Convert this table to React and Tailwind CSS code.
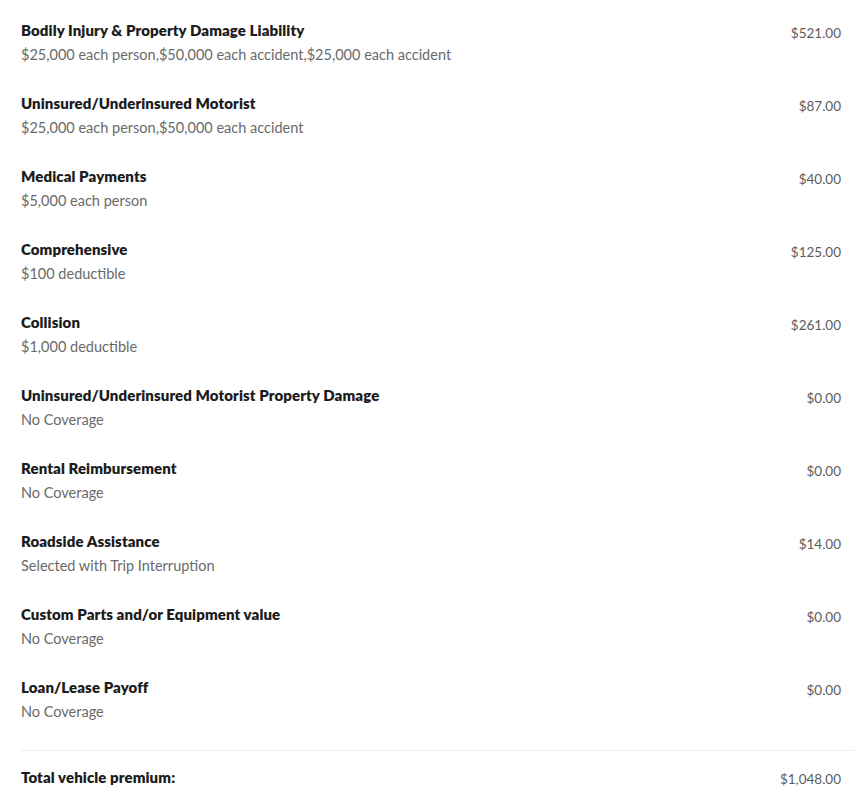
const COVERAGES = [
  { name: "Bodily Injury & Property Damage Liability", detail: "$25,000 each person,$50,000 each accident,$25,000 each accident", price: "$521.00" },
  { name: "Uninsured/Underinsured Motorist", detail: "$25,000 each person,$50,000 each accident", price: "$87.00" },
  { name: "Medical Payments", detail: "$5,000 each person", price: "$40.00" },
  { name: "Comprehensive", detail: "$100 deductible", price: "$125.00" },
  { name: "Collision", detail: "$1,000 deductible", price: "$261.00" },
  { name: "Uninsured/Underinsured Motorist Property Damage", detail: "No Coverage", price: "$0.00" },
  { name: "Rental Reimbursement", detail: "No Coverage", price: "$0.00" },
  { name: "Roadside Assistance", detail: "Selected with Trip Interruption", price: "$14.00" },
  { name: "Custom Parts and/or Equipment value", detail: "No Coverage", price: "$0.00" },
  { name: "Loan/Lease Payoff", detail: "No Coverage", price: "$0.00" },
];

export default function App() {
  return (
    <div className="bg-white min-h-screen pl-[21px] pr-[8px] pt-[20px] font-['Lato','Liberation_Sans',sans-serif]">
      {COVERAGES.map((c) => (
        <div key={c.name} className="flex justify-between h-[73px] pr-[14px]">
          <div>
            <div className="text-[15px] leading-5 font-extrabold tracking-[0.1px] text-[#1c1c1c]">{c.name}</div>
            <div className="mt-[5px] text-[14.5px] leading-5 text-[#6a6a6a]">{c.detail}</div>
          </div>
          <div className="mt-[3px] text-[13.5px] leading-5 text-[#5c5c5c]">{c.price}</div>
        </div>
      ))}
      <div className="border-t border-[#e3eff9] pt-4 flex justify-between pr-[14px]">
        <div className="text-[15px] leading-5 font-extrabold tracking-[0.1px] text-[#1c1c1c]">Total vehicle premium:</div>
        <div className="mt-[2px] text-[13.5px] leading-5 text-[#5c5c5c]">$1,048.00</div>
      </div>
    </div>
  );
}
